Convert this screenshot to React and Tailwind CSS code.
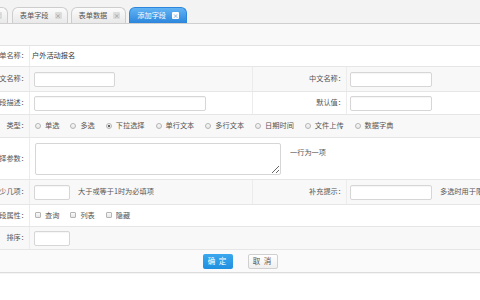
import React from "react";

const FONT = { fontFamily: '"Noto Sans CJK SC", "Noto Sans", sans-serif' };

// ── small pieces ─────────────────────────────────────────────
function TabClose({ active }) {
  return (
    <span
      className={
        "w-[7px] h-[7px] flex items-center justify-center rounded-[1px] text-[6px] leading-none " +
        (active ? "bg-white text-[#2f8be0]" : "bg-[#dcdcdc] text-[#888]")
      }
    >
      ×
    </span>
  );
}

function Tab({ label, active, className = "" }) {
  return (
    <div
      className={
        "h-[16px] flex items-center gap-[6px] pl-[7px] pr-[5px] rounded-t-[6px] border border-b-0 shrink-0 " +
        (active
          ? "bg-gradient-to-b from-[#62b4f4] to-[#2b86dc] border-[#2b86dc] text-white"
          : "bg-gradient-to-b from-[#fbfbfb] to-[#e9e9e9] border-[#cdcdcd] text-[#555]") +
        " " +
        className
      }
    >
      <span className="whitespace-nowrap">{label}</span>
      <TabClose active={active} />
    </div>
  );
}

function Label({ text, w = "w-[30px]" }) {
  return (
    <div className={w + " h-full shrink-0 border-r border-[#ececec] flex items-center justify-end overflow-hidden whitespace-nowrap pr-[1px] text-[#555]"}>
      <span className="shrink-0">{text}</span>
    </div>
  );
}

function Box({ w }) {
  return (
    <input
      readOnly
      className={w + " h-[15px] shrink-0 border border-[#d6d6d6] rounded-[2px] bg-white shadow-[inset_0_1px_1px_rgba(0,0,0,0.04)] outline-none"}
    />
  );
}

function Radio({ label, checked }) {
  return (
    <div className="flex items-center mr-[11px] shrink-0">
      <span className="w-[6px] h-[6px] rounded-full border border-[#b5b5b5] bg-gradient-to-b from-[#fafafa] to-[#e6e6e6] flex items-center justify-center mr-[4px]">
        {checked && <span className="w-[2px] h-[2px] rounded-full bg-[#333]" />}
      </span>
      <span className="text-[#555]">{label}</span>
    </div>
  );
}

function Check({ label }) {
  return (
    <div className="flex items-center mr-[11px] shrink-0">
      <span className="w-[6px] h-[6px] rounded-[1px] border border-[#b5b5b5] bg-gradient-to-b from-[#fafafa] to-[#e6e6e6] mr-[4px]" />
      <span className="text-[#555]">{label}</span>
    </div>
  );
}

function Row({ h, gray, children }) {
  return (
    <div className={h + " flex items-center border-b border-[#e6e6e6] overflow-hidden " + (gray ? "bg-[#f8f8f8]" : "bg-white")}>
      {children}
    </div>
  );
}

function Cell({ children }) {
  return (
    <div className="w-[223px] h-full shrink-0 border-r border-[#ececec] flex items-center pl-[4px] whitespace-nowrap">
      {children}
    </div>
  );
}

// ── main ─────────────────────────────────────────────────────
export default function App() {
  return (
    <div className="w-[480px] h-[300px] overflow-hidden bg-white text-[7.2px] leading-none" style={FONT}>
      {/* tab bar */}
      <div className="h-[24px] bg-[#f3f3f3] border-b border-[#cfcfcf] flex items-end gap-[3px] overflow-hidden">
        <Tab label="表单管理" className="-ml-[48px]" />
        <Tab label="表单字段" className="ml-[1px]" />
        <Tab label="表单数据" />
        <Tab label="添加字段" active className="pr-[7px]" />
      </div>

      {/* toolbar band */}
      <div className="h-[22px] bg-[#f9f9f9] border-b border-[#e3e3e3]" />

      {/* form */}
      <Row h="h-[21px]">
        <Label text="表单名称：" />
        <div className="pl-[2px] text-[#333]">户外活动报名</div>
      </Row>

      <Row h="h-[25px]" gray>
        <Label text="英文名称：" />
        <Cell>
          <Box w="w-[81px]" />
        </Cell>
        <Label text="中文名称：" w="w-[94px]" />
        <div className="flex-1 flex items-center pl-[3px]">
          <Box w="w-[82px]" />
        </div>
      </Row>

      <Row h="h-[23px]">
        <Label text="字段描述：" />
        <Cell>
          <Box w="w-[172px]" />
        </Cell>
        <Label text="默认值：" w="w-[94px]" />
        <div className="flex-1 flex items-center pl-[3px]">
          <Box w="w-[82px]" />
        </div>
      </Row>

      <Row h="h-[23px]" gray>
        <Label text="类型：" />
        <div className="flex items-center pl-[5px]">
          <Radio label="单选" />
          <Radio label="多选" />
          <Radio label="下拉选择" checked />
          <Radio label="单行文本" />
          <Radio label="多行文本" />
          <Radio label="日期时间" />
          <Radio label="文件上传" />
          <Radio label="数据字典" />
        </div>
      </Row>

      <Row h="h-[42px]">
        <Label text="选择参数：" />
        <div className="flex items-start pl-[5px] h-full pt-[5px]">
          <textarea
            readOnly
            className="w-[246px] h-[32px] border border-[#d6d6d6] rounded-[2px] bg-white outline-none"
          />
          <span className="ml-[9px] mt-[6px] text-[#555]">一行为一项</span>
        </div>
      </Row>

      <Row h="h-[25px]" gray>
        <Label text="至少几项：" />
        <Cell>
          <Box w="w-[36px]" />
          <span className="ml-[8px] text-[#555]">大于或等于1时为必填项</span>
        </Cell>
        <Label text="补充提示：" w="w-[94px]" />
        <div className="flex-1 min-w-0 flex items-center pl-[3px] whitespace-nowrap">
          <Box w="w-[82px]" />
          <span className="ml-[8px] text-[#555]">多选时用于限制最大选择项数</span>
        </div>
      </Row>

      <Row h="h-[22px]">
        <Label text="字段属性：" />
        <div className="flex items-center pl-[5px]">
          <Check label="查询" />
          <Check label="列表" />
          <Check label="隐藏" />
        </div>
      </Row>

      <Row h="h-[23px]" gray>
        <Label text="排序：" />
        <div className="flex items-center pl-[4px]">
          <Box w="w-[36px]" />
        </div>
      </Row>

      <div className="h-[23px] flex items-center justify-center gap-[15px] bg-[#fafafa] border-b border-[#dcdcdc] shadow-[0_1px_1px_rgba(0,0,0,0.04)]">
        <button className="w-[30px] h-[15px] rounded-[2px] bg-gradient-to-b from-[#3ba7ee] to-[#1f8fe0] text-white text-[7.5px] tracking-[1px]">
          确 定
        </button>
        <button className="w-[30px] h-[15px] rounded-[2px] border border-[#d0d0d0] bg-gradient-to-b from-[#ffffff] to-[#efefef] text-[#555] text-[7.5px] tracking-[1px]">
          取 消
        </button>
      </div>
    </div>
  );
}
